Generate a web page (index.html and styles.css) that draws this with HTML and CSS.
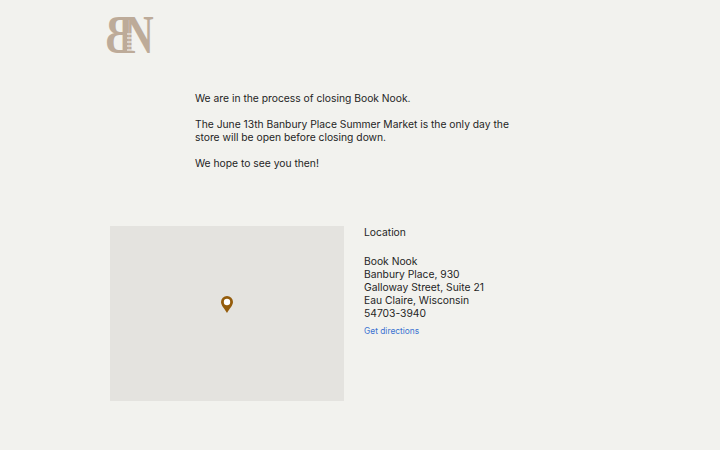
FILE: index.html
```html
<!DOCTYPE html>
<html lang="en">
<head>
    <meta charset="UTF-8">
    <title>Book Nook</title>
    <link rel="stylesheet" href="styles.css">
</head>
<body>
    <header class="site-header">
        <svg class="logo" width="48" height="38" viewBox="0 0 48 38" aria-label="Book Nook">
            <text class="logo-letter" transform="translate(27 37) scale(-0.74 1)">B</text>
            <text class="logo-letter" transform="translate(19 37) scale(0.72 1)">N</text>
            <path class="logo-lines" d="M21 18h6M21 22h8M21 26h10M21 30h12M21 34h13"/>
        </svg>
    </header>

    <section class="notice">
        <p>We are in the process of closing Book Nook.</p>
        <p>The June 13th Banbury Place Summer Market is the only day the store will be open before closing down.</p>
        <p>We hope to see you then!</p>
    </section>

    <section class="location">
        <div class="map">
            <svg width="12" height="17" viewBox="0 0 12 17">
                <path class="pin" d="M6 0a6 6 0 0 1 6 6c0 3.600-3.600 6.600-6 11C3.600 12.600 0 9.600 0 6a6 6 0 0 1 6-6z"/>
                <circle class="pin-hole" cx="6" cy="6" r="3.200"/>
            </svg>
        </div>
        <div class="details">
            <h2>Location</h2>
            <address>
                Book Nook<br>
                Banbury Place, 930<br>
                Galloway Street, Suite 21<br>
                Eau Claire, Wisconsin<br>
                54703-3940
            </address>
            <a href="#">Get directions</a>
        </div>
    </section>
</body>
</html>
```

FILE: styles.css
```css
body {
    margin: 0;
    background-color: #f2f2ee;
    color: #1f1f1f;
    font-family: "Inter", "Liberation Sans", sans-serif;
    font-size: 10.300px;
    line-height: 13px;
}
.site-header {
    padding: 16px 0 0 106px;
    height: 38px;
}
.logo {
    display: block;
    overflow: visible;
}
.logo-letter {
    font-family: "Liberation Serif", serif;
    font-size: 55px;
    font-weight: 700;
    fill: #bdab99;
}
.logo-lines {
    fill: none;
    stroke: #f2f2ee;
    stroke-width: 1.500;
    opacity: 0.75;
}
.notice {
    width: 322px;
    margin: 38px 0 0 195px;
}
.notice p {
    margin: 0 0 13px;
}
.location {
    display: flex;
    gap: 20px;
    margin: 56px 0 0 110px;
}
.map {
    box-sizing: border-box;
    width: 234px;
    height: 175px;
    padding-bottom: 18px;
    background-color: #e4e3df;
    display: flex;
    align-items: center;
    justify-content: center;
}
.pin {
    fill: #945c0b;
}
.pin-hole {
    fill: #fff;
}
.details h2 {
    font-size: 10.300px;
    font-weight: 400;
    margin: 0;
}
address {
    font-style: normal;
    margin: 16px 0 4px;
}
.details a {
    color: #3b73d1;
    font-size: 8.400px;
    text-decoration: none;
}
```
